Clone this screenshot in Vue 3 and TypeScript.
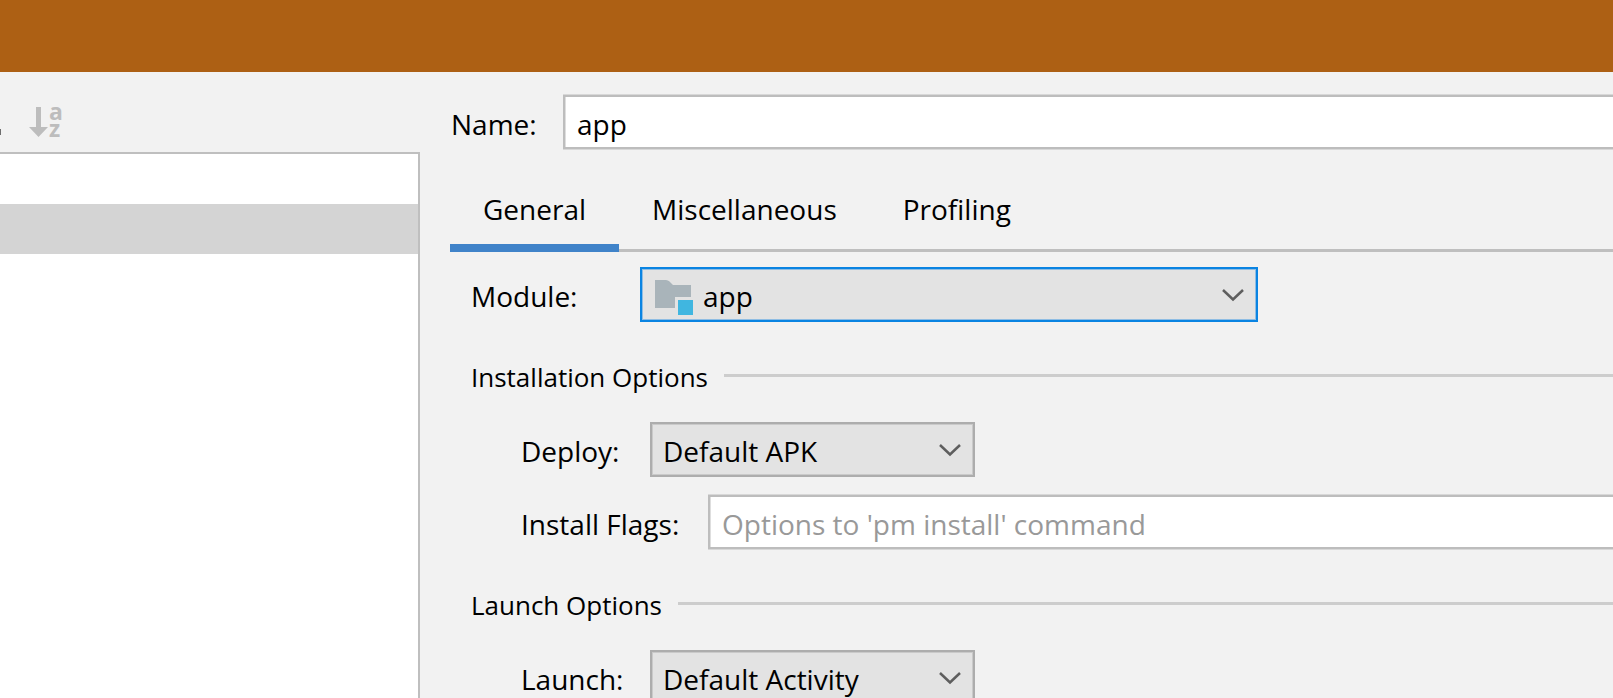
<script setup lang="ts">
import { ref } from 'vue'

type TabName = 'General' | 'Miscellaneous' | 'Profiling'

const tabs: TabName[] = ['General', 'Miscellaneous', 'Profiling']
const activeTab = ref<TabName>('General')
const name = ref('app')
const moduleName = ref('app')
const deploy = ref('Default APK')
const installFlags = ref('')
const launch = ref('Default Activity')
</script>

<template>
  <div class="window">
    <header class="titlebar"></header>
    <div class="body">
      <aside class="sidebar">
        <div class="toolbar">
          <svg class="more" width="1" height="6" viewBox="0 0 1 6" aria-hidden="true">
            <rect width="1" height="6" fill="#6e6e6e" />
          </svg>
          <button class="sort" type="button" aria-label="Sort configurations">
            <svg width="34" height="32" viewBox="0 0 34 32" aria-hidden="true">
              <path d="M7 1h5v20h7l-9.500 10L0 21h7z" fill="#bdbdbd" />
              <g class="sort-letters" fill="#bdbdbd">
                <text x="20" y="14">a</text>
                <text x="20" y="31">z</text>
              </g>
            </svg>
          </button>
        </div>
        <ul class="list">
          <li class="row"></li>
          <li class="row selected"></li>
        </ul>
      </aside>

      <main class="editor">
        <div class="name-row">
          <label for="name">Name:</label>
          <input id="name" v-model="name" class="field" type="text" />
        </div>

        <nav class="tabs" role="tablist">
          <button
            v-for="tab in tabs"
            :key="tab"
            class="tab"
            :class="{ active: tab === activeTab }"
            type="button"
            role="tab"
            :aria-selected="tab === activeTab"
            @click="activeTab = tab"
          >
            {{ tab }}
          </button>
        </nav>

        <form class="form" @submit.prevent>
          <div class="form-row module-row">
            <label for="module">Module:</label>
            <div class="combo focused">
              <svg class="folder" width="38" height="36" viewBox="0 0 38 36" aria-hidden="true">
                <path d="M0 0h11q2 0 3.500 1.500L18 5h18v12H20v11H0z" fill="#a9b4ba" />
                <path d="M23 20h15v15H23z" fill="#40b6e0" />
              </svg>
              <select id="module" v-model="moduleName">
                <option>app</option>
              </select>
              <svg class="chevron" width="22" height="14" viewBox="0 0 22 14" aria-hidden="true">
                <path d="M1 2l10 9.500L21 2" fill="none" stroke="#5e5e5e" stroke-width="2.500" />
              </svg>
            </div>
          </div>

          <fieldset class="group">
            <legend class="group-title">Installation Options</legend>
            <div class="form-row">
              <label for="deploy">Deploy:</label>
              <div class="combo">
                <select id="deploy" v-model="deploy">
                  <option>Default APK</option>
                </select>
                <svg class="chevron" width="22" height="14" viewBox="0 0 22 14" aria-hidden="true">
                  <path d="M1 2l10 9.500L21 2" fill="none" stroke="#5e5e5e" stroke-width="2.500" />
                </svg>
              </div>
            </div>
            <div class="form-row flags-row">
              <label for="flags">Install Flags:</label>
              <input
                id="flags"
                v-model="installFlags"
                class="field"
                type="text"
                placeholder="Options to 'pm install' command"
              />
            </div>
          </fieldset>

          <fieldset class="group">
            <legend class="group-title">Launch Options</legend>
            <div class="form-row">
              <label for="launch">Launch:</label>
              <div class="combo">
                <select id="launch" v-model="launch">
                  <option>Default Activity</option>
                </select>
                <svg class="chevron" width="22" height="14" viewBox="0 0 22 14" aria-hidden="true">
                  <path d="M1 2l10 9.500L21 2" fill="none" stroke="#5e5e5e" stroke-width="2.500" />
                </svg>
              </div>
            </div>
          </fieldset>
        </form>
      </main>
    </div>
  </div>
</template>

<style>
body {
  margin: 0;
  background: #f2f2f2;
}
</style>

<style scoped>
.window {
  display: flex;
  flex-direction: column;
  height: 100vh;
  overflow: hidden;
  background: #f2f2f2;
  color: #000;
  font-family: "Open Sans", "Noto Sans", sans-serif;
  font-size: 28px;
  line-height: 40px;
}

.window * {
  box-sizing: border-box;
}

button,
input,
select {
  margin: 0;
  font: inherit;
  color: inherit;
  border-radius: 0;
  outline: none;
}

.titlebar {
  flex: none;
  height: 72px;
  background: #ad6014;
}

.body {
  display: flex;
  flex: 1;
  min-height: 0;
}

.sidebar {
  display: flex;
  flex: none;
  flex-direction: column;
  width: 420px;
}

.toolbar {
  display: flex;
  flex: none;
  align-items: flex-end;
  gap: 28px;
  height: 80px;
  padding-bottom: 14px;
}

.more {
  margin-bottom: 3px;
}

.sort {
  display: flex;
  padding: 0;
  border: 0;
  background: none;
}

.sort-letters {
  font-size: 23px;
  font-weight: 700;
}

.list {
  flex: 1;
  margin: 0;
  padding: 0;
  border: solid #bfbfbf;
  border-width: 2px 2px 0 0;
  background: #fff;
  list-style: none;
}

.row {
  height: 50px;
}

.row.selected {
  background: #d4d4d4;
}

.editor {
  flex: 1;
  min-width: 0;
  padding: 22px 0 0 30px;
}

.name-row {
  display: grid;
  grid-template-columns: 113px 1fr;
  align-items: center;
}

label {
  padding-top: 3px;
  white-space: nowrap;
}

.name-row label {
  padding-left: 1px;
}

.field {
  width: 100%;
  min-width: 0;
  height: 54px;
  margin: 1px 0;
  padding: 4px 0 0 12px;
  border: 2px solid #bdbdbd;
  border-right: 0;
  background: #fff;
  box-shadow: 0 1px #d8d8d8, 0 -1px #d8d8d8, inset 1px 0 #dedede;
}

.field::placeholder {
  color: #999;
  opacity: 1;
}

.tabs {
  display: flex;
  height: 102px;
  padding-top: 32px;
  box-shadow: inset 0 -3px #bfbfbf;
}

.tab {
  padding: 0 33px 8px;
  border: 0;
  border-bottom: 8px solid transparent;
  background: none;
}

.tab.active {
  border-bottom-color: #4083c9;
}

.form {
  padding: 15px 0 0 21px;
}

.form-row {
  display: grid;
  grid-template-columns: 129px 325px;
  align-items: center;
}

.module-row {
  grid-template-columns: 169px 618px;
}

.flags-row {
  grid-template-columns: 187px 1fr;
  margin-top: 17px;
}

.combo {
  position: relative;
}

.combo select {
  display: block;
  width: 100%;
  height: 55px;
  padding: 3px 48px 0 11px;
  border: 2px solid #adadad;
  background: #e3e3e3;
  box-shadow: inset 0 0 0 1px #cacaca;
  appearance: none;
}

.combo.focused select {
  padding-left: 61px;
  border-color: #0a84e2;
  box-shadow: inset 0 0 0 1px #8fbde3;
}

.folder {
  position: absolute;
  top: 13px;
  left: 15px;
}

.chevron {
  position: absolute;
  top: 21px;
  right: 14px;
  pointer-events: none;
}

.group {
  min-width: 0;
  margin: 35px 0 0;
  padding: 0 0 0 50px;
  border: 0;
}

.group-title {
  display: flex;
  gap: 16px;
  align-items: center;
  width: calc(100% + 50px);
  margin: 0 0 25px -50px;
  padding: 0;
  font-size: 26px;
}

.group-title::after {
  flex: 1;
  height: 3px;
  margin-bottom: 3px;
  background: #cdcdcd;
  content: "";
}
</style>
